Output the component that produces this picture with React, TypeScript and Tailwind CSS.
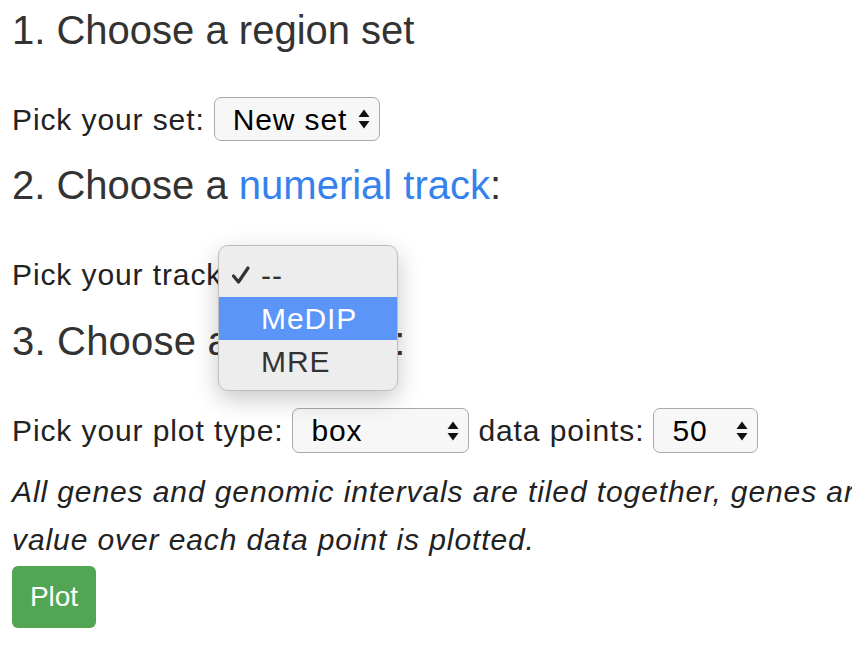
import type { ReactNode } from "react";

function Arrows() {
  return (
    <svg width="12" height="20" viewBox="0 0 12 20" className="block shrink-0">
      <path d="M0.5 8 L6 0.5 L11.5 8 Z" fill="#111" />
      <path d="M0.5 12 L11.5 12 L6 19.5 Z" fill="#111" />
    </svg>
  );
}

function FakeSelect({ value, width }: { value: string; width: string }) {
  return (
    <div
      className={`flex h-full items-center justify-between rounded-[7px] border border-[#a9a9a9] bg-[#f7f7f7] pl-[18px] pr-[9px] text-black ${width}`}
    >
      <span>{value}</span>
      <Arrows />
    </div>
  );
}

function Row({ children, className = "" }: { children: ReactNode; className?: string }) {
  return (
    <div className={`flex items-center gap-[9px] text-[30px] tracking-[0.9px] text-[#222] ${className}`}>
      {children}
    </div>
  );
}

export default function App() {
  return (
    <div className="relative h-[660px] w-[852px] overflow-hidden bg-white px-3 font-['Liberation_Sans',Arial,sans-serif] text-[#333]">
      <h3 className="mt-[8px] text-[40px] font-light leading-[44px]">1. Choose a region set</h3>

      <Row className="mt-[45px] h-[44px]">
        <span>Pick your set:</span>
        <FakeSelect value="New set" width="w-[166px]" />
      </Row>

      <h3 className="mt-[22px] text-[40px] font-light leading-[44px]">
        2. Choose a <a className="text-[#3581ee]">numerial track</a>:
      </h3>

      <Row className="mt-[45px] h-[44px]">
        <span>Pick your track:</span>
        <FakeSelect value="--" width="w-[140px]" />
      </Row>

      <h3 className="mt-[23px] text-[40px] font-light leading-[44px] tracking-[0.2px]">3. Choose a plot type:</h3>

      <Row className="mt-[45px] h-[45px]">
        <span>Pick your plot type:</span>
        <FakeSelect value="box" width="w-[177px]" />
        <span>data points:</span>
        <FakeSelect value="50" width="w-[105px]" />
      </Row>

      <p className="mt-[15px] whitespace-nowrap text-[30px] italic leading-[48px] tracking-[0.9px] text-[#222]">
        All genes and genomic intervals are tiled together, genes are scaled to the same length, and the average
        <br />
        value over each data point is plotted.
      </p>

      <button className="mt-[2px] h-[62px] w-[84px] rounded-[6px] bg-[#52a552] text-[28px] text-white">
        Plot
      </button>

      {/* open native popup of the track select */}
      <div className="absolute left-[218px] top-[245px] w-[180px] rounded-[10px] border border-[#bdbdbd] bg-[#ededed] py-[7px] text-[30px] tracking-[0.9px] text-[#333] shadow-[0_8px_24px_rgba(0,0,0,0.22)]">
        <div className="flex h-[44px] items-center">
          <svg width="20" height="20" viewBox="0 0 20 20" className="ml-[12px] mr-[10px]">
            <path d="M2.5 11 L7.5 17 L17 3" fill="none" stroke="#333" strokeWidth="3.2" strokeLinecap="round" strokeLinejoin="round" />
          </svg>
          <span>--</span>
        </div>
        <div className="flex h-[43px] items-center bg-[#5b95f7] pl-[42px] text-white">MeDIP</div>
        <div className="flex h-[43px] items-center pl-[42px]">MRE</div>
      </div>
    </div>
  );
}
